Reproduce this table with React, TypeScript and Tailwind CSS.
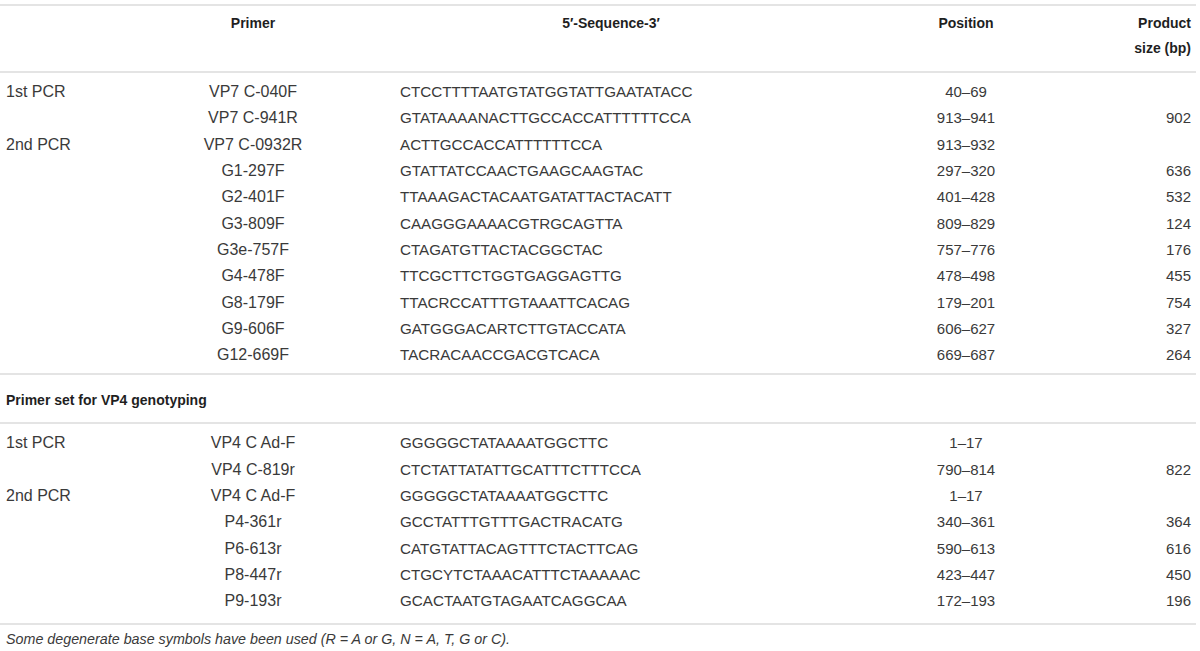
import React from "react";

// Primer table: VP7 / VP4 genotyping

type Row = {
  step?: string;
  primer: string;
  seq: string;
  pos: string;
  size?: string;
};

const vp7Rows: Row[] = [
  { step: "1st PCR", primer: "VP7 C-040F", seq: "CTCCTTTTAATGTATGGTATTGAATATACC", pos: "40–69" },
  { primer: "VP7 C-941R", seq: "GTATAAAANACTTGCCACCATTTTTTCCA", pos: "913–941", size: "902" },
  { step: "2nd PCR", primer: "VP7 C-0932R", seq: "ACTTGCCACCATTTTTTCCA", pos: "913–932" },
  { primer: "G1-297F", seq: "GTATTATCCAACTGAAGCAAGTAC", pos: "297–320", size: "636" },
  { primer: "G2-401F", seq: "TTAAAGACTACAATGATATTACTACATT", pos: "401–428", size: "532" },
  { primer: "G3-809F", seq: "CAAGGGAAAACGTRGCAGTTA", pos: "809–829", size: "124" },
  { primer: "G3e-757F", seq: "CTAGATGTTACTACGGCTAC", pos: "757–776", size: "176" },
  { primer: "G4-478F", seq: "TTCGCTTCTGGTGAGGAGTTG", pos: "478–498", size: "455" },
  { primer: "G8-179F", seq: "TTACRCCATTTGTAAATTCACAG", pos: "179–201", size: "754" },
  { primer: "G9-606F", seq: "GATGGGACARTCTTGTACCATA", pos: "606–627", size: "327" },
  { primer: "G12-669F", seq: "TACRACAACCGACGTCACA", pos: "669–687", size: "264" },
];

const vp4Rows: Row[] = [
  { step: "1st PCR", primer: "VP4 C Ad-F", seq: "GGGGGCTATAAAATGGCTTC", pos: "1–17" },
  { primer: "VP4 C-819r", seq: "CTCTATTATATTGCATTTCTTTCCA", pos: "790–814", size: "822" },
  { step: "2nd PCR", primer: "VP4 C Ad-F", seq: "GGGGGCTATAAAATGGCTTC", pos: "1–17" },
  { primer: "P4-361r", seq: "GCCTATTTGTTTGACTRACATG", pos: "340–361", size: "364" },
  { primer: "P6-613r", seq: "CATGTATTACAGTTTCTACTTCAG", pos: "590–613", size: "616" },
  { primer: "P8-447r", seq: "CTGCYTCTAAACATTTCTAAAAAC", pos: "423–447", size: "450" },
  { primer: "P9-193r", seq: "GCACTAATGTAGAATCAGGCAA", pos: "172–193", size: "196" },
];

const cols = "grid grid-cols-[154px_186px_554px_132px_1fr]";

function Line() {
  return <div className="h-[2px] w-[1196px] bg-[#e4e4e4]" />;
}

function TableRow({ row }: { row: Row }) {
  return (
    <div className={`${cols} h-[26.3px] items-center`}>
      <div>{row.step}</div>
      <div className="text-center">{row.primer}</div>
      <div className="pl-[54px] text-[15.2px]">{row.seq}</div>
      <div className="text-center text-[15px]">{row.pos}</div>
      <div className="text-right text-[15px]">{row.size}</div>
    </div>
  );
}

export default function App() {
  return (
    <div className="w-[1200px] h-[651px] bg-white pt-[4px] text-[16px] leading-[24px] text-[#3a3a3a] font-['Liberation_Sans',Arial,sans-serif]">
      <Line />

      {/* Header */}
      <div className={`${cols} w-[1191px] pl-[6px] pt-[5px] pb-[10px] text-[14px] font-bold text-[#1f1f1f] leading-[25px]`}>
        <div />
        <div className="text-center">Primer</div>
        <div className="text-center pr-[24px]">5′-Sequence-3′</div>
        <div className="text-center">Position</div>
        <div className="text-right">
          Product
          <br />
          size (bp)
        </div>
      </div>
      <Line />

      {/* VP7 */}
      <div className="w-[1191px] pl-[6px] pt-[6px] pb-[5px]">
        {vp7Rows.map((row, i) => (
          <TableRow key={i} row={row} />
        ))}
      </div>
      <Line />

      <div className="pl-[6px] pt-[13px] pb-[9px] text-[14px] leading-[25px] font-bold text-[#1f1f1f]">
        Primer set for VP4 genotyping
      </div>
      <Line />

      {/* VP4 */}
      <div className="w-[1191px] pl-[6px] pt-[6px] pb-[9px]">
        {vp4Rows.map((row, i) => (
          <TableRow key={i} row={row} />
        ))}
      </div>
      <Line />

      <p className="pl-[6px] pt-[2px] leading-[25px] text-[14.3px] italic text-[#3a3a3a]">
        Some degenerate base symbols have been used (R = A or G, N = A, T, G or C).
      </p>
    </div>
  );
}
